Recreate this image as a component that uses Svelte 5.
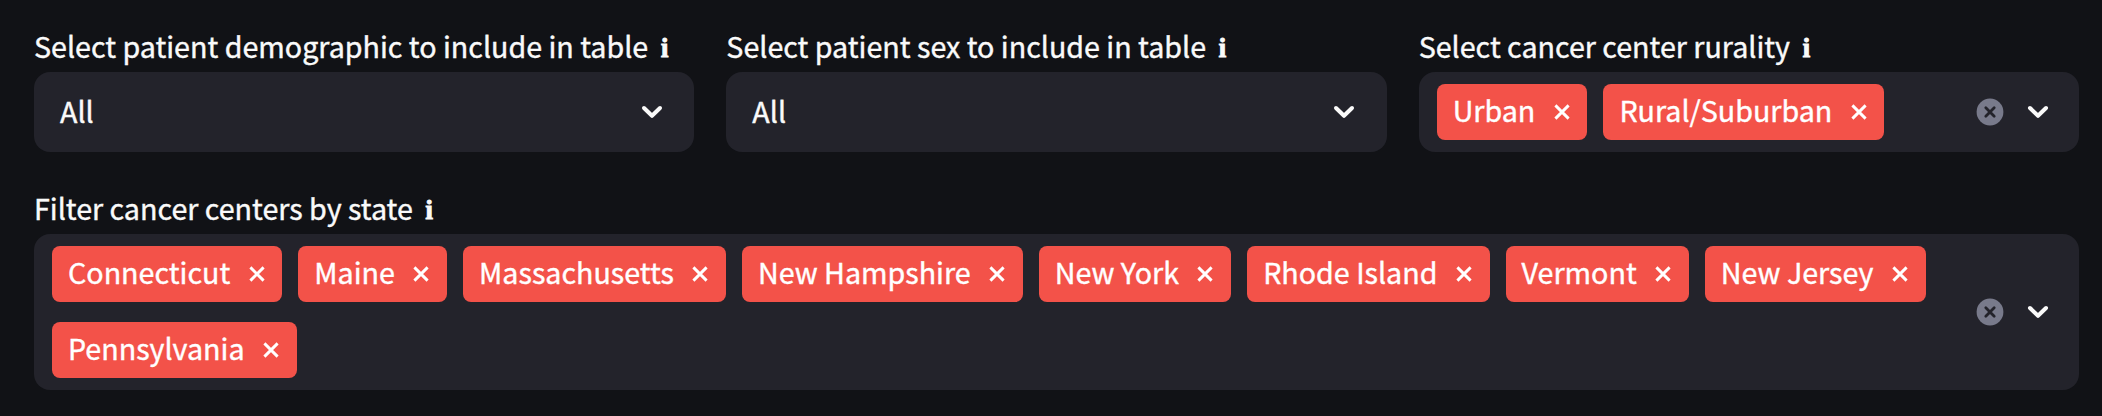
<script>
  const selects = [
    { label: 'Select patient demographic to include in table', value: 'All' },
    { label: 'Select patient sex to include in table', value: 'All' }
  ];
  const rurality = ['Urban', 'Rural/Suburban'];
  const states = [
    'Connecticut', 'Maine', 'Massachusetts', 'New Hampshire', 'New York',
    'Rhode Island', 'Vermont', 'New Jersey', 'Pennsylvania'
  ];
</script>

{#snippet title(text)}
  <div class="label"><span>{text}</span><b class="info">i</b></div>
{/snippet}

{#snippet chevron()}
  <svg class="chevron" viewBox="0 0 24 16"><path d="M4 4L12 11.8L20 4" /></svg>
{/snippet}

{#snippet multi(text, items)}
  <div class="field">
    {@render title(text)}
    <div class="box multi">
      <div class="tags">
        {#each items as item}
          <div class="tag">
            <span>{item}</span>
            <svg class="close" viewBox="0 0 18 18"><path d="M2.4 2.4L15.6 15.6M15.6 2.4L2.4 15.6" /></svg>
          </div>
        {/each}
      </div>
      <svg class="clear" viewBox="0 0 28 28">
        <circle cx="14" cy="14" r="13.4" />
        <path d="M9.8 9.8L18.2 18.2M18.2 9.8L9.8 18.2" />
      </svg>
      {@render chevron()}
    </div>
  </div>
{/snippet}

<main>
  <div class="row">
    {#each selects as s}
      <div class="field">
        {@render title(s.label)}
        <div class="box single"><span>{s.value}</span>{@render chevron()}</div>
      </div>
    {/each}
    {@render multi('Select cancer center rurality', rurality)}
  </div>
  {@render multi('Filter cancer centers by state', states)}
</main>

<style>
  :global(body) { background: #111216; }
  main {
    box-sizing: border-box;
    width: 2102px;
    height: 416px;
    padding: 24px 23px 26px 34px;
    display: flex;
    flex-direction: column;
    gap: 34px;
    color: #fafafa;
    font: 28.65px/48px "Noto Sans CJK SC", "Open Sans", sans-serif;
    -webkit-text-stroke: 0.4px currentColor;
  }
  .row { display: grid; grid-template-columns: repeat(3, minmax(0, 1fr)); gap: 32px; }
  .label { display: flex; height: 48px; line-height: 44px; white-space: nowrap; }
  .info { font: bold 28px/48px "Liberation Serif", serif; margin-left: 12.5px; -webkit-text-stroke-width: 0.8px; }
  .box {
    box-sizing: border-box;
    display: flex;
    align-items: center;
    min-height: 80px;
    border-radius: 16px;
    background: #23232b;
    padding: 12px 29px 12px 18px;
  }
  .single { justify-content: space-between; padding-left: 26px; padding-right: 30.5px; }
  .single span { line-height: 44px; padding-bottom: 2px; }
  .tags { flex: 1; display: flex; flex-wrap: wrap; gap: 20px 16px; }
  .tag {
    display: flex;
    align-items: center;
    height: 56px;
    border-radius: 8px;
    background: #f35249;
    color: #fff;
    padding: 0 16.75px 0 16px;
    white-space: nowrap;
  }
  .tag span { line-height: 52px; height: 56px; }
  svg { flex: none; fill: none; stroke-linecap: round; stroke-linejoin: round; }
  .close { width: 18px; height: 18px; margin-left: 17.4px; stroke: #fff; stroke-width: 2.9; stroke-linecap: butt; }
  .clear { width: 28px; height: 28px; margin-right: 22px; }
  .clear circle { fill: #787a8b; }
  .clear path { stroke: #23232b; stroke-width: 2.8; }
  .chevron { width: 24px; height: 16px; stroke: #fafafa; stroke-width: 4; }
</style>
